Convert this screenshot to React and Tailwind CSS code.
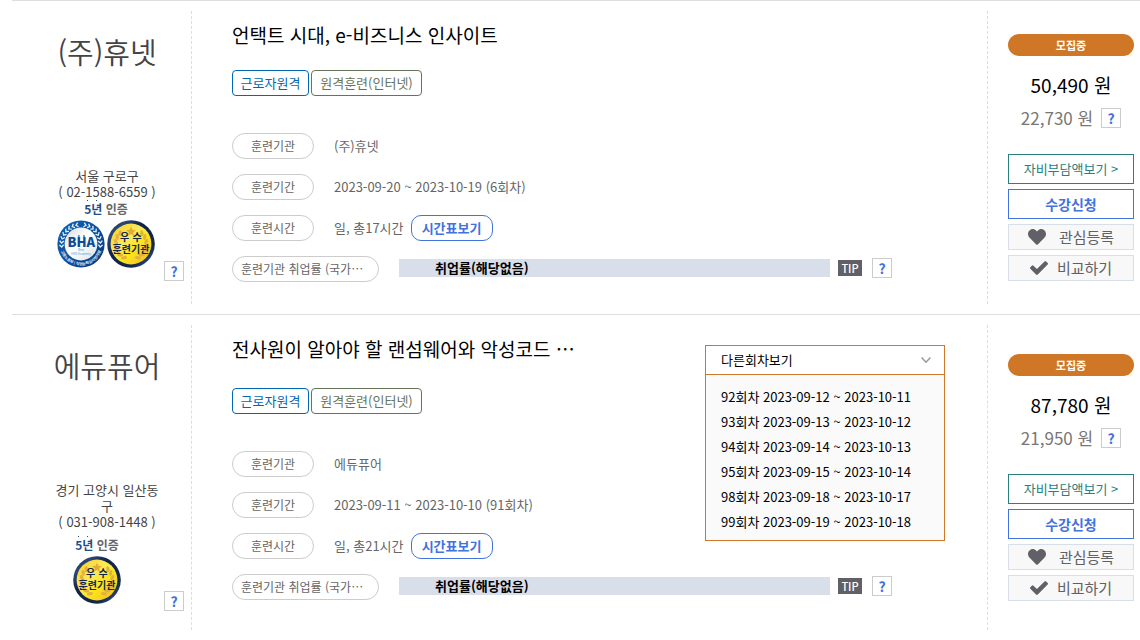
import React, { useState } from "react";
import { FaHeart } from "react-icons/fa";

const courses = [
  {
    id: "hunet",
    company: "(주)휴넷",
    region: "서울 구로구",
    phone: "( 02-1588-6559 )",
    badges: ["bha", "best"],
    markClass: "",
    badgeClass: "pl-[18px] pb-[13px]",
    title: "언택트 시대, e-비즈니스 인사이트",
    titleRowClass: "h-[50px]",
    period: "2023-09-20 ~ 2023-10-19 (6회차)",
    hours: "일, 총17시간",
    price: "50,490 원",
    ownPrice: "22,730 원",
    sessions: [],
  },
  {
    id: "edupure",
    company: "에듀퓨어",
    region: "경기 고양시 일산동구",
    phone: "( 031-908-1448 )",
    badges: ["best"],
    markClass: "mt-[6px]",
    badgeClass: "pb-[7px]",
    title: "전사원이 알아야 할 랜섬웨어와 악성코드 …",
    titleRowClass: "h-[54px]",
    period: "2023-09-11 ~ 2023-10-10 (91회차)",
    hours: "일, 총21시간",
    price: "87,780 원",
    ownPrice: "21,950 원",
    sessions: [
      "92회차 2023-09-12 ~ 2023-10-11",
      "93회차 2023-09-13 ~ 2023-10-12",
      "94회차 2023-09-14 ~ 2023-10-13",
      "95회차 2023-09-15 ~ 2023-10-14",
      "98회차 2023-09-18 ~ 2023-10-17",
      "99회차 2023-09-19 ~ 2023-10-18",
    ],
  },
];

function HelpButton() {
  return (
    <button
      type="button"
      aria-label="도움말"
      className="flex size-5 shrink-0 items-center justify-center border border-[#ccc] bg-white text-[14px] leading-none font-bold text-[#4272dd]"
    >
      ?
    </button>
  );
}

function CheckIcon() {
  return (
    <svg viewBox="121 334 1550 1188" className="h-[14px] w-[18px]" fill="currentColor" aria-hidden="true">
      <path d="M1671 566q0 40-28 68l-724 724-136 136q-28 28-68 28t-68-28l-136-136-362-362q-28-28-28-68t28-68l136-136q28-28 68-28t68 28l294 295 656-657q28-28 68-28t68 28l136 136q28 28 28 68z" />
    </svg>
  );
}

function BhaBadge() {
  const chevrons = [];
  for (let i = 0; i < 8; i += 1) {
    chevrons.push(12 + i * 12);
  }
  return (
    <svg viewBox="0 0 48 48" className="size-12" role="img" aria-label="BHA">
      <defs>
        <linearGradient id="bhaRing" x1="0" y1="0" x2="1" y2="1">
          <stop offset="0" stopColor="#0f63b4" />
          <stop offset="0.5" stopColor="#0b50a0" />
          <stop offset="1" stopColor="#0a3678" />
        </linearGradient>
        <linearGradient id="bhaFace" x1="0" y1="0" x2="1" y2="1">
          <stop offset="0" stopColor="#d5dade" />
          <stop offset="0.45" stopColor="#ffffff" />
          <stop offset="1" stopColor="#dde2e6" />
        </linearGradient>
        <path id="bhaArc" d="M2.6 24 A21.4 21.4 0 0 0 45.4 24" />
      </defs>
      <circle cx="24" cy="24" r="23.6" fill="url(#bhaRing)" />
      <circle cx="24" cy="24" r="16.4" fill="url(#bhaFace)" />
      {chevrons.map((angle) => (
        <g key={angle} fill="none" stroke="#e8f1fa" strokeWidth="1.3">
          <path d="M25.2 2.4 L23 4.6 L25.2 6.6" transform={`rotate(${-angle} 24 24)`} />
          <path d="M22.8 2.4 L25 4.6 L22.8 6.6" transform={`rotate(${angle} 24 24)`} />
        </g>
      ))}
      <text fontSize="3.8" fontWeight="700" fill="#e8f1fa">
        <textPath href="#bhaArc" startOffset="50%" textAnchor="middle">
          고용노동부 | 직업능력심사평가원
        </textPath>
      </text>
      <circle cx="21.8" cy="16" r="1" fill="#2a8fd0" />
      <circle cx="27" cy="16" r="1" fill="#2a8fd0" />
      <text x="24.3" y="27.4" fontSize="13" fontWeight="900" textAnchor="middle" fill="#0b4c97">
        BHA
      </text>
      <text x="24" y="30.8" fontSize="3" textAnchor="middle" fill="#5ba6d6">
        Best
      </text>
      <text x="24" y="35.2" fontSize="3" textAnchor="middle" fill="#5ba6d6">
        HRD Academy
      </text>
    </svg>
  );
}

function BestBadge({ id }) {
  const leaves = [45, 63, 81, 99, 117, 135, 153];
  return (
    <svg viewBox="0 0 48 48" className="size-12" role="img" aria-label="우수 훈련기관">
      <defs>
        <linearGradient id={`rim-${id}`} x1="0" y1="0" x2="1" y2="1">
          <stop offset="0" stopColor="#0d1c3e" />
          <stop offset="0.2" stopColor="#2c4878" />
          <stop offset="0.4" stopColor="#0f2249" />
          <stop offset="0.75" stopColor="#13284f" />
          <stop offset="0.88" stopColor="#2c4878" />
          <stop offset="1" stopColor="#0d1c3e" />
        </linearGradient>
        <linearGradient id={`gold-${id}`} x1="0" y1="0" x2="1" y2="1">
          <stop offset="0" stopColor="#f6cf2a" />
          <stop offset="0.4" stopColor="#fbe95a" />
          <stop offset="0.6" stopColor="#fde51a" />
          <stop offset="1" stopColor="#edb92c" />
        </linearGradient>
      </defs>
      <circle cx="24" cy="24" r="23.8" fill={`url(#rim-${id})`} />
      <circle cx="24" cy="24" r="20.4" fill={`url(#gold-${id})`} />
      <path
        d="M24 6.6 L25.4 9.8 L28.8 10.1 L26.2 12.4 L27 15.8 L24 14 L21 15.8 L21.8 12.4 L19.2 10.1 L22.6 9.8 Z"
        fill="#e5ab35"
      />
      {leaves.map((angle) => (
        <g key={angle} fill="#e4b041">
          <ellipse cx="24" cy="8.6" rx="3" ry="1.6" transform={`rotate(${angle} 24 24) rotate(35 24 8.6)`} />
          <ellipse cx="24" cy="8.6" rx="3" ry="1.6" transform={`rotate(${-angle} 24 24) rotate(-35 24 8.6)`} />
        </g>
      ))}
      <text x="17.5" y="21.4" fontSize="10" fontWeight="700" textAnchor="middle" fill="#14264c">
        우
      </text>
      <text x="30" y="21.4" fontSize="10" fontWeight="700" textAnchor="middle" fill="#14264c">
        수
      </text>
      <text x="24" y="33.2" fontSize="10" fontWeight="700" textAnchor="middle" fill="#14264c">
        훈련기관
      </text>
    </svg>
  );
}

function Provider({ course }) {
  return (
    <div className="flex w-[180px] shrink-0 flex-col border-r border-dashed border-[#ddd] pr-[7px] pl-[18px] text-center text-[#444]">
      <h2 className="mt-4 h-12 text-[29px] leading-[48px] font-[350]">{course.company}</h2>
      <div className="mt-[93px] px-6 text-[13px] leading-4">
        <p className="break-all">{course.region}</p>
        <p className="whitespace-nowrap">{course.phone}</p>
      </div>
      <div className={`flex items-end ${course.markClass}`}>
        <div className={`flex flex-1 flex-col items-center ${course.badgeClass}`}>
          <p className="relative h-5 text-[12px] leading-[18px] font-bold text-[#666]">
            <span className="text-[#1d4f86]">5년</span> 인증
            <span className="absolute top-0 left-[3px] size-px bg-[#1d4f86]" />
            <span className="absolute top-0 left-3 size-px bg-[#1d4f86]" />
          </p>
          <div className="flex gap-[2px]">
            {course.badges.map((badge) =>
              badge === "bha" ? <BhaBadge key={badge} /> : <BestBadge key={badge} id={course.id} />
            )}
          </div>
        </div>
        <HelpButton />
      </div>
    </div>
  );
}

function SessionMenu({ sessions }) {
  const [open, setOpen] = useState(true);
  return (
    <div className="relative mt-3 w-60 shrink-0 text-[13px] text-black">
      <button
        type="button"
        aria-expanded={open}
        onClick={() => setOpen(!open)}
        className="flex h-[30px] w-full items-center justify-between border border-[#cf7727] bg-white pr-[13px] pl-[15px]"
      >
        다른회차보기
        <svg viewBox="0 0 10 6" className="h-[6px] w-[10px]" fill="none" stroke="#999" strokeWidth="1.5">
          <path d="M0.6 0.6 L5 5.2 L9.4 0.6" />
        </svg>
      </button>
      {open && (
        <ul className="absolute inset-x-0 top-full border border-t-0 border-[#cf7727] bg-[#fafafa] px-[15px] pt-[9px] pb-[6px]">
          {sessions.map((session) => (
            <li key={session} className="h-[25px] leading-[25px] whitespace-nowrap">
              <a href="#session">{session}</a>
            </li>
          ))}
        </ul>
      )}
    </div>
  );
}

function Pill({ children, wide }) {
  return (
    <dt
      className={`flex h-[26px] shrink-0 items-center rounded-full border border-[#ccc] text-[12px] whitespace-nowrap ${
        wide ? "w-[147px] pl-2" : "w-[82px] justify-center"
      }`}
    >
      {children}
    </dt>
  );
}

function Details({ course }) {
  return (
    <div className="min-w-0 flex-1 border-r border-dashed border-[#ddd] pt-[8px] pr-[42px] pl-10">
      <div className={`flex items-start justify-between ${course.titleRowClass}`}>
        <h3 className="text-[19px] leading-[32px] whitespace-nowrap text-black">
          <a href="#course">{course.title}</a>
        </h3>
        {course.sessions.length > 0 && <SessionMenu sessions={course.sessions} />}
      </div>
      <div className="mt-px flex gap-[2px] text-[13px]">
        <span className="flex h-[26px] w-[77px] items-center justify-center rounded-[4px] border border-[#0068b7] text-[#0068b7]">
          근로자원격
        </span>
        <span className="flex h-[26px] w-[111px] items-center justify-center rounded-[4px] border border-[#66755a] text-[#66755a]">
          원격훈련(인터넷)
        </span>
      </div>
      <dl className="mt-[37px] flex flex-col gap-[15px] text-[13px] text-[#666]">
        <div className="flex items-center gap-5">
          <Pill>훈련기관</Pill>
          <dd>{course.company}</dd>
        </div>
        <div className="flex items-center gap-5">
          <Pill>훈련기간</Pill>
          <dd>{course.period}</dd>
        </div>
        <div className="flex items-center gap-5">
          <Pill>훈련시간</Pill>
          <dd className="flex items-center gap-[7px]">
            {course.hours}
            <button
              type="button"
              className="flex h-[26px] w-[82px] items-center justify-center rounded-[10px] border border-[#4272dd] font-bold text-[#4272dd]"
            >
              시간표보기
            </button>
          </dd>
        </div>
        <div className="flex items-start gap-5 pr-[53px]">
          <Pill wide>훈련기관 취업률 (국가…</Pill>
          <dd className="flex min-w-0 flex-1 items-center pt-[2px]">
            <span className="h-[18px] flex-1 bg-[#d8deea] pl-9 leading-[18px] font-bold text-black">
              취업률(해당없음)
            </span>
            <span className="mr-[10px] ml-2 flex h-[16px] w-6 items-center justify-center bg-[#606066] text-[11px] font-medium text-white">
              TIP
            </span>
            <HelpButton />
          </dd>
        </div>
      </dl>
    </div>
  );
}

function Actions({ course }) {
  return (
    <div className="flex w-[152px] shrink-0 flex-col justify-center pr-[6px] pl-5">
      <p className="flex h-[22px] items-center justify-center rounded-full bg-[#cf7727] text-[11px] font-bold text-white">
        모집중
      </p>
      <p className="mt-4 text-center text-[19px] leading-[26px] text-black">{course.price}</p>
      <div className="mt-[7px] flex h-[26px] items-center justify-center gap-2 text-[17px] text-[#777]">
        <span>{course.ownPrice}</span>
        <HelpButton />
      </div>
      <div className="mt-[23px] flex flex-col gap-[5px]">
        <button type="button" className="h-[30px] border border-[#288080] text-[13px] text-[#288080]">
          자비부담액보기 &gt;
        </button>
        <button type="button" className="h-[30px] border border-[#4272dd] text-[14px] font-bold text-[#4272dd]">
          수강신청
        </button>
        <button
          type="button"
          className="flex h-[26px] items-center justify-center gap-[13px] border border-[#d8deea] bg-[#f8f8f8] text-[15px] text-[#606066]"
        >
          <FaHeart className="size-[18px]" />
          관심등록
        </button>
        <button
          type="button"
          className="flex h-[26px] items-center justify-center gap-[9px] border border-[#d8deea] bg-[#f8f8f8] text-[15px] text-[#606066]"
        >
          <CheckIcon />
          비교하기
        </button>
      </div>
    </div>
  );
}

export default function App() {
  return (
    <main
      lang="ko"
      className="overflow-hidden bg-white pl-3 font-['Noto_Sans_CJK_KR',sans-serif]"
    >
      {courses.map((course) => (
        <article key={course.id} className="flex border-t border-[#ddd] py-[10px]">
          <div className={`flex w-full ${course.sessions.length > 0 ? "min-h-[305px]" : "min-h-[293px]"}`}>
            <Provider course={course} />
            <Details course={course} />
            <Actions course={course} />
          </div>
        </article>
      ))}
    </main>
  );
}
